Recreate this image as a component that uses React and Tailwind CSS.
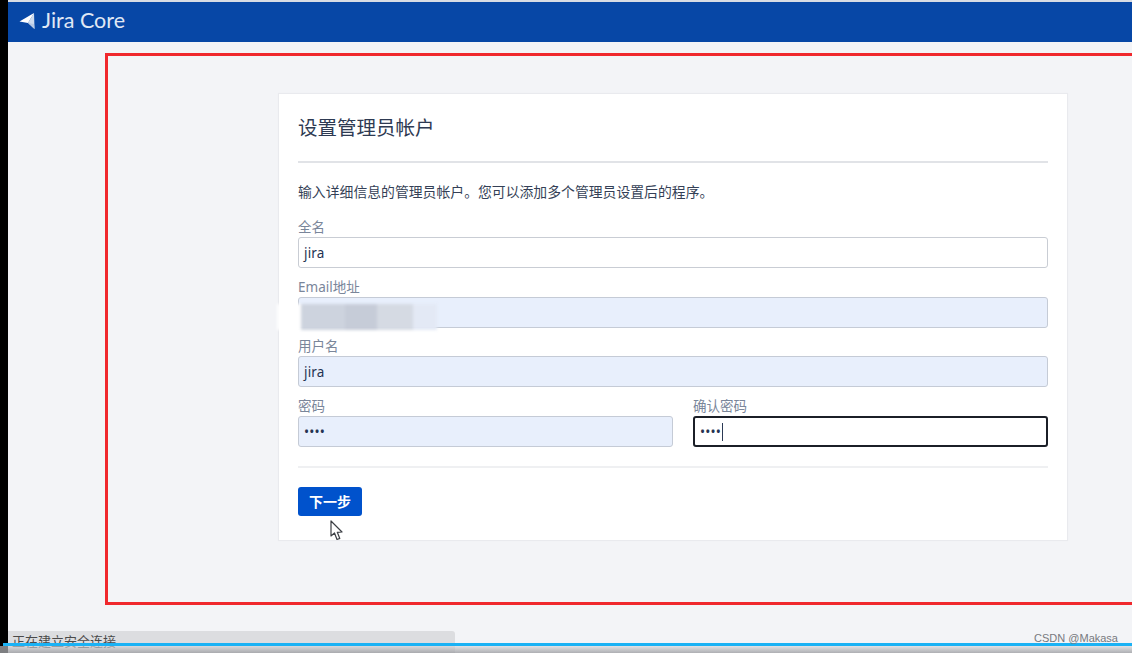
const font = { fontFamily: '"Noto Sans", "Noto Sans CJK SC", sans-serif' };

function Field({ label, value, filled, focused, blurred, caret, className }) {
  return (
    <div className={className}>
      <label className="block h-[20px] text-[13.5px] leading-[20px] text-[#7a869a]">{label}</label>
      <div
        className={
          "relative flex h-[31px] items-center overflow-visible rounded-[3px] px-[5px] pt-[2px] text-[13.5px] text-[#253352] " +
          (focused
            ? "border-2 border-[#1b1f27] bg-white"
            : filled
              ? "border border-[#c5cbd6] bg-[#e8effc]"
              : "border border-[#c9cdd4] bg-white")
        }
      >
        {value && <span className="tracking-[0.2px]">{value}</span>}
        {caret && <span className="ml-[1px] h-[18px] w-px bg-[#2b3a55]"></span>}
        {blurred && (
          <div className="absolute -left-[22px] top-[6px] flex h-[26px] w-[160px] blur-[1.5px]">
            <div className="w-[24px] bg-white"></div>
            <div className="w-[44px] bg-[#cdd3de]"></div>
            <div className="w-[32px] bg-[#c6ccd8]"></div>
            <div className="w-[36px] bg-[#d5dae3]"></div>
            <div className="w-[24px] bg-[#e3e9f5]"></div>
          </div>
        )}
      </div>
    </div>
  );
}

export default function App() {
  return (
    <div className="relative flex h-[653px] w-[1132px] overflow-hidden bg-[#f3f4f7]" style={font}>
      <div className="w-[8px] shrink-0 bg-black"></div>
      <div className="flex min-w-0 flex-1 flex-col">
        <div className="h-[2px] bg-[#d8dce4]"></div>
        <header className="flex h-[40px] items-center gap-[7px] bg-[#0747a6] pb-[2px] pl-[11px] text-white">
          <svg width="16" height="18" viewBox="0 0 16 18">
            <path d="M9 11 L15 1 L15.5 17 Z" fill="#cfdcef" />
            <path d="M0.5 9.5 L15 1 L9 11 Z" fill="#ffffff" />
            <path d="M9 11 L15.5 17 L15 12 Z" fill="#b8c9e4" />
          </svg>
          <span className="text-[21.5px] leading-none font-normal text-[#e0e9f5]" style={{ fontFamily: "Lato, sans-serif" }}>
            Jira Core
          </span>
        </header>
        <main className="flex flex-1 items-start pl-[270px] pt-[51px]">
          <section className="flex h-[448px] w-[790px] flex-col border border-[#e9eaee] bg-white px-[19px] shadow-[0_0_1px_rgba(0,0,0,0.04)]">
            <h1 className="flex h-[69px] items-center border-b-2 border-[#e1e3e7] text-[19.5px] font-normal text-[#2e3a52]">
              设置管理员帐户
            </h1>
            <p className="mt-[19px] text-[13.85px] leading-[20px] text-[#343f56]">
              输入详细信息的管理员帐户。您可以添加多个管理员设置后的程序。
            </p>
            <div className="mt-[15px] flex flex-col gap-[8.5px]">
              <Field label="全名" value="jira" />
              <Field label="Email地址" filled blurred />
              <Field label="用户名" value="jira" filled />
              <div className="flex gap-[20px]">
                <Field className="w-[375px]" label="密码" value="••••" filled />
                <Field className="flex-1" label="确认密码" value="••••" focused caret />
              </div>
            </div>
            <div className="mt-[19px] border-t-2 border-[#eff0f2]"></div>
            <div className="relative mt-[19px]">
              <button className="h-[29px] w-[64px] rounded-[3px] bg-[#0052cc] text-[14px] font-bold text-white">
                下一步
              </button>
              <svg className="absolute left-[32px] top-[33px]" width="14" height="21" viewBox="0 0 14 21">
                <path
                  d="M1 1 L1 16 L4.5 13 L7 19.5 L9.8 18.4 L7.3 12.3 L12 12 Z"
                  fill="#fff"
                  stroke="#3c3f44"
                  strokeWidth="1.2"
                  strokeLinejoin="round"
                />
              </svg>
            </div>
          </section>
        </main>
      </div>

      {/* red annotation box */}
      <div className="absolute left-[105px] top-[53px] h-[552px] w-[1040px] border-[3px] border-[#f0282d]"></div>

      {/* status bubble and bottom strip */}
      <div className="absolute bottom-0 left-[8px] h-[22px] w-[447px] overflow-hidden rounded-tr-[3px] bg-[#dcdde0] pl-[4px] text-[13px] leading-[21px] text-[#4a4a4a]">
        正在建立安全连接...
      </div>
      <div className="absolute bottom-0 left-0 h-[7px] w-full bg-gradient-to-b from-[#d6d7da]/60 to-[#9d9ea2]/80"></div>
      <div className="absolute bottom-[7px] left-[3px] right-0 h-[3px] bg-[#1ab2f5]"></div>
      <div className="absolute bottom-[7px] right-[14px] text-[11px] leading-[16px] text-[#77797e]" style={{ fontFamily: '"Liberation Sans", sans-serif' }}>
        CSDN @Makasa
      </div>
    </div>
  );
}
